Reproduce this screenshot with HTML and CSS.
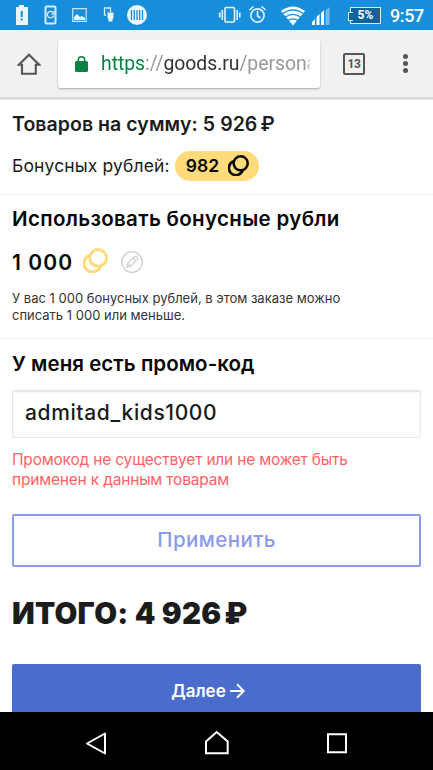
FILE: index.html
```html
<!DOCTYPE html>
<html lang="ru">
<head>
<meta charset="utf-8">
<title>goods.ru</title>
<link rel="stylesheet" href="styles.css">
</head>
<body>
<div class="phone">
  <header class="status">
    <svg class="status-icons" width="150" height="30" viewBox="0 0 150 30">
      <path fill="#eaf5fd" d="M16 7h3V5h5v2h4v18H16z"/>
      <path stroke="#168edb" stroke-width="2" d="M21.700 11v6M21.700 18.500v2"/>
      <rect x="45.500" y="6.500" width="10" height="17" rx="1" fill="none" stroke="#d3eafa" stroke-width="2"/>
      <path fill="none" stroke="#e2f2fc" stroke-width="1.200" d="M53 12.500a3.200 3.200 0 1 0 .7 3M54 11v3h-3"/>
      <path fill="none" stroke="#cbe6f8" stroke-width="1.200" d="M72.700 8.700h13.500v12.600H72.700z"/>
      <path fill="#eaf5fd" d="M74 20v-3l3-3 3 3 2-1 3 2v2z"/>
      <path fill="none" stroke="#d8edfb" stroke-width="1.300" d="M106 15h-1.500V8h6v4"/>
      <path fill="#eaf5fd" d="M107.500 12.500h6v6h-1v3h-4v-3h-1z"/>
      <circle cx="137" cy="15" r="10" fill="#edf7fe"/>
      <path stroke="#168edb" stroke-width="1.300" d="M131.500 10v10M134.300 10v10M137 10v10M139.700 10v10M142.500 10v10"/>
    </svg>
    <svg class="status-icons" width="114" height="30" viewBox="216 0 114 30">
      <g fill="none" stroke="#e5f3fc" stroke-width="1.600">
        <rect x="225" y="7.500" width="9.500" height="14.500" rx="1"/>
        <path d="M222.300 10v10M219.700 12.500v5M237.200 10v10M239.800 12.500v5"/>
        <circle cx="257.500" cy="15.500" r="6.600"/>
        <path d="M257.500 11v5l3 2M249.500 10l4-3.500M265.500 10l-4-3.500"/>
      </g>
      <path fill="#fff" d="M281 11q12-9 24 0l-12 14.500z"/>
      <g fill="none" stroke="#168edb" stroke-width="1.200">
        <path d="M282.500 13.600q10.500-7.600 21 0"/>
        <path d="M285 17.300q8-5.800 16 0"/>
        <path d="M287.500 20.800q5.500-4 11 0"/>
      </g>
      <path fill="#fff" d="M312 25v-3l3-3v6zM316.500 25v-8l3-3v11zM321 25V13l3-3v15z"/>
      <path fill="#6ebbea" d="M325.500 25V10.500l4-3.500v18z"/>
    </svg>
    <div class="battery">5%</div>
    <div class="clock">9:57</div>
  </header>
  <nav class="toolbar">
    <svg class="home" width="24" height="24" viewBox="0 0 24 24"><path fill="none" stroke="#555" stroke-width="2.100" d="M1.800 12.700 12 2.700l10.200 10h-3.400v9H5v-9z"/></svg>
    <div class="address">
      <svg width="13" height="16" viewBox="0 0 13 16"><path fill="none" stroke="#0b8043" stroke-width="1.600" d="M3.300 6V4a3.200 3.200 0 0 1 6.400 0v2"/><rect y="5" width="13" height="11" rx="1.500" fill="#0b8043"/></svg>
      <div class="url"><span class="secure">https</span><span>://</span><span class="host">goods.ru</span><span>/persona</span></div>
    </div>
    <div class="tabs">13</div>
    <div class="more"><i></i><i></i><i></i></div>
  </nav>
  <main>
    <section class="summary">
      <div class="goods">Товаров на сумму: 5 926<span class="rub">₽</span></div>
      <div class="bonus"><span class="bonus-label">Бонусных рублей:</span>
        <div class="pill"><span>982</span><svg width="21" height="21" viewBox="0 0 25 25"><g fill="none" stroke="#080808" stroke-width="3"><circle cx="15.100" cy="9.900" r="8.400"/><path d="M7 7.500A8.400 8.400 0 1 0 17.500 18"/></g></svg></div>
      </div>
    </section>
    <section class="use">
      <h2 class="use-title">Использовать бонусные рубли</h2>
      <div class="amount"><span>1 000</span>
        <svg class="coins" width="25" height="25" viewBox="0 0 25 25"><g fill="none" stroke="#ffdb7c" stroke-width="3"><circle cx="15.100" cy="9.900" r="8.400"/><path d="M7 7.500A8.400 8.400 0 1 0 17.500 18"/></g></svg>
        <svg width="22" height="22" viewBox="0 0 22 22"><g fill="none" stroke="#d0d0d0"><circle cx="11" cy="11" r="10.300" stroke-width="1.200"/><path stroke-width="1.200" d="m5.500 16.500 1-4 7-7q1-.8 2 .1l.8.8q1 1 0 2l-7 7zM12.300 6.800l2.900 2.900M6.500 12.500l2.800 2.900"/></g></svg>
      </div>
      <p class="hint"><span>У вас 1 000 бонусных рублей, в этом заказе можно</span><br><span>списать 1 000 или меньше.</span></p>
    </section>
    <section class="promo">
      <h2 class="promo-title">У меня есть промо-код</h2>
      <div class="field">admitad_kids1000</div>
      <p class="error"><span>Промокод не существует или не может быть</span><br><span>применен к данным товарам</span></p>
      <div class="apply">Применить</div>
      <div class="total">ИТОГО: 4 926<span class="rub">₽</span></div>
      <div class="next"><span>Далее</span><svg width="15" height="16" viewBox="0 0 15 16"><path fill="none" stroke="#fff" stroke-width="2" d="M0 8h13.500M7 1.300 13.700 8 7 14.700"/></svg></div>
    </section>
  </main>
  <footer class="navbar">
    <svg width="433" height="58" viewBox="0 0 433 58"><g fill="none" stroke="#fff" stroke-width="2"><path d="M105 21.500v20L87 31.500z" stroke-linejoin="round"/><path d="M206 41.300V29.500l10.700-9.500 11 9.500v11.800z"/><path d="M328 22.300h18v18h-18z"/></g></svg>
  </footer>
</div>
</body>
</html>
```
FILE: styles.css
```css
* { box-sizing: border-box; }
body { margin: 0; background: #fff; color: #1c1c1c; font-family: Inter, "Noto Sans", sans-serif; }
h2, p { margin: 0; }
svg { display: block; flex: none; }
.phone { width: 433px; height: 770px; display: flex; flex-direction: column; overflow: hidden; white-space: nowrap; }
.status { height: 30px; flex: none; display: flex; align-items: center; background: #168edb; color: #fff; font-family: Roboto, sans-serif; }
.status-icons + .status-icons { margin-left: 66px; }
.battery { position: relative; margin: 0 0 0 20px; width: 31px; height: 17px; border: 1.500px solid #d8edfb; background: #0d649d; font-size: 12px; font-weight: 700; line-height: 15px; text-align: center; }
.battery::before { content: ""; position: absolute; left: -3px; top: 4px; width: 4px; height: 7px; border: 1px solid #d8edfb; border-right: 0; background: #0d649d; }
.clock { margin: 1px 0 0 9px; font-size: 18px; font-weight: 500; line-height: 28px; letter-spacing: -.4px; }
.toolbar { height: 69px; flex: none; display: flex; align-items: center; background: #f1f1f1; border-bottom: 2px solid #d9d9d9; }
.home { margin: 0 0 0 17px; }
.address { width: 262px; height: 48px; margin: 0 0 0 17px; padding-left: 17px; display: flex; align-items: center; background: #fff; border-radius: 2px; box-shadow: 0 1px 2px #aaa; }
.url { width: 210px; margin-left: 13px; overflow: hidden; color: #999; font: 19.400px/30px Roboto, sans-serif; letter-spacing: -.05px; -webkit-mask-image: linear-gradient(to right, #000 98%, transparent); mask-image: linear-gradient(to right, #000 98%, transparent); }
.secure { color: #0b8043; }
.host { color: #333; }
.tabs { width: 22px; height: 22px; margin-left: 23px; border: 2px solid #555; border-radius: 2px; color: #555; font: 700 12px/18px Roboto, sans-serif; letter-spacing: -.5px; text-align: center; }
.more { margin-left: 38px; display: grid; gap: 2px; }
.more i { width: 5px; height: 5px; border-radius: 50%; background: #555; }
main { height: 613px; flex: none; overflow: hidden; }
section { padding: 0 12px; }
.summary { height: 96px; border-bottom: 1px solid #f0f0f0; border-top: 1px solid #e8e8e8; }
.goods { padding-top: 10px; font-size: 19.500px; font-weight: 600; line-height: 28px; letter-spacing: .05px; }
.rub { margin-left: 3px; }
.bonus { margin-top: 13px; display: flex; align-items: center; font-size: 17.500px; line-height: 30px; letter-spacing: .13px; }
.pill { width: 84px; height: 30px; margin-left: 5px; padding-left: 11px; display: flex; align-items: center; gap: 9px; border-radius: 15px; background: #ffdb7c; color: #080808; font-size: 17.500px; font-weight: 600; }
.pill svg { margin-bottom: 2px; }
.use { height: 144px; border-bottom: 1px solid #f0f0f0; color: #080808; }
.use-title, .promo-title { padding-top: 10px; font-size: 20.500px; font-weight: 600; line-height: 28px; }
.use-title { letter-spacing: .33px; }
.amount { margin-top: 16px; height: 26px; display: flex; align-items: center; font-size: 21px; font-weight: 600; letter-spacing: 1.100px; }
.amount span { width: 71px; }
.amount .coins { margin: 0 13px 3px 0; }
.hint { margin-top: 15px; color: #333; font-size: 13px; line-height: 17px; }
.promo-title { color: #080808; letter-spacing: .05px; padding-top: 11px; }
.field { height: 48px; margin-top: 12px; padding-left: 12px; border: 1px solid #e8e8e8; border-radius: 2px; box-shadow: inset 0 1px 2px #e0e0e0; font-size: 21px; font-weight: 500; line-height: 43px; letter-spacing: .62px; }
.error { margin-top: 12px; color: #ff6364; font-size: 15.500px; line-height: 20px; letter-spacing: -.19px; }
.apply { height: 53px; margin-top: 24px; border: 2px solid #8b9aea; border-radius: 2px; color: #8b9aea; font-size: 20.500px; font-weight: 500; line-height: 47px; letter-spacing: .4px; text-align: center; }
.total { margin-top: 28px; font-size: 29.500px; font-weight: 900; line-height: 36px; letter-spacing: .25px; }
.next { height: 60px; margin-top: 33px; padding: 0 17px 6px 0; display: flex; align-items: center; justify-content: center; gap: 4px; border-radius: 2px; background: #4a6dcb; color: #fff; font-size: 17px; font-weight: 600; }
.navbar { height: 58px; flex: none; background: #000; }
```
